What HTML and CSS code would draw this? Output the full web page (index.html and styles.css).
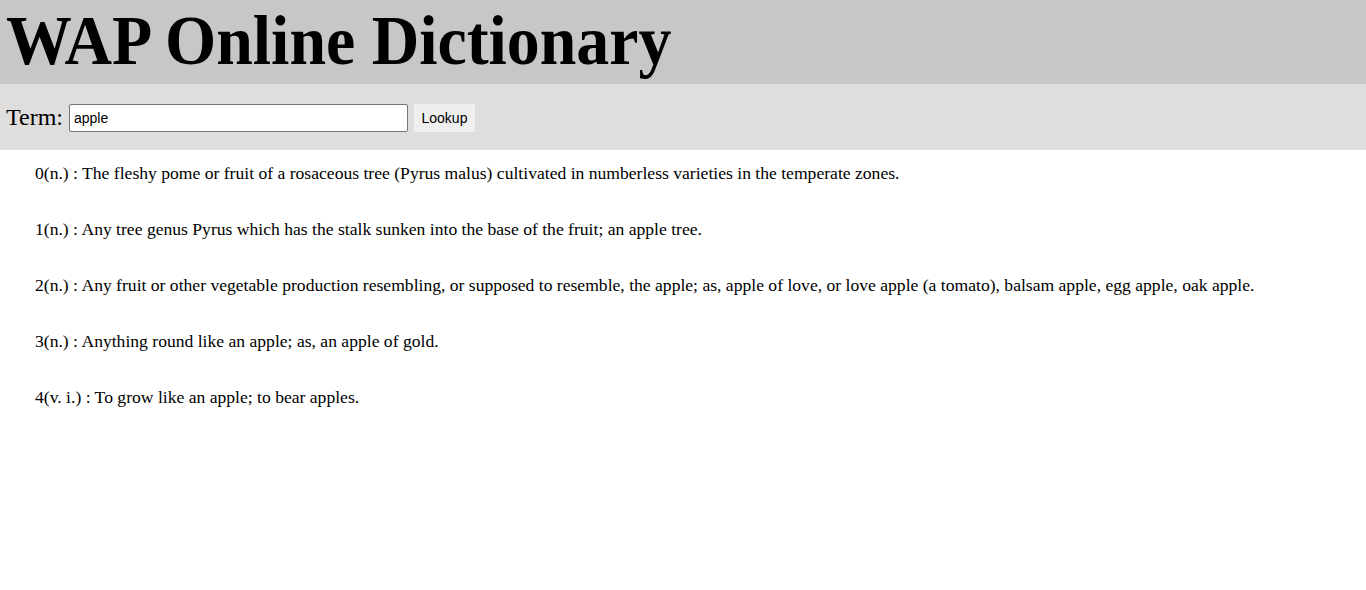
FILE: index.html
```html
<!DOCTYPE html>
<html>
<head>
<meta charset="utf-8">
<title>WAP Online Dictionary</title>
<link rel="stylesheet" href="styles.css">
</head>
<body>
<header class="header">
  <h1 class="title">WAP Online Dictionary</h1>
</header>
<form class="search">
  <label class="search-label" for="term">Term:</label>
  <input class="search-input" id="term" type="text" value="apple">
  <button class="search-button" type="button">Lookup</button>
</form>
<ul class="defs">
  <li class="def">0(n.) : The fleshy pome or fruit of a rosaceous tree (Pyrus malus) cultivated in numberless varieties in the temperate zones.</li>
  <li class="def">1(n.) : Any tree genus Pyrus which has the stalk sunken into the base of the fruit; an apple tree.</li>
  <li class="def">2(n.) : Any fruit or other vegetable production resembling, or supposed to resemble, the apple; as, apple of love, or love apple (a tomato), balsam apple, egg apple, oak apple.</li>
  <li class="def">3(n.) : Anything round like an apple; as, an apple of gold.</li>
  <li class="def">4(v. i.) : To grow like an apple; to bear apples.</li>
</ul>
</body>
</html>
```

FILE: styles.css
```css
html, body {
  margin: 0;
  padding: 0;
  background: #ffffff;
  font-family: "Liberation Serif", "Times New Roman", serif;
  color: #000;
}
.header {
  background: #c8c6c7;
  height: 84px;
  display: flex;
  align-items: center;
  padding: 0 6px;
}
.title {
  margin: 0;
  font-size: 70px;
  font-weight: bold;
  line-height: 1;
  white-space: nowrap;
  transform: scaleX(0.94);
  transform-origin: left center;
  position: relative;
  top: -1px;
}
.search {
  background: #e0dddd;
  height: 66px;
  display: flex;
  align-items: center;
  padding: 0 6px;
  margin: 0;
}
.search-label {
  font-size: 24px;
  margin-right: 6px;
}
.search-input {
  width: 339px;
  height: 28px;
  box-sizing: border-box;
  border: 1px solid #767676;
  border-radius: 2px;
  padding: 0 4px;
  font-family: "Liberation Sans", Arial, sans-serif;
  font-size: 14px;
  background: #fff;
  margin: 2px 0 0;
}
.search-button {
  margin: 2px 0 0 6px;
  height: 28px;
  width: 61px;
  border: none;
  background: #efefef;
  font-family: "Liberation Sans", Arial, sans-serif;
  font-size: 14px;
  padding: 0;
  color: #000;
}
.defs {
  list-style: none;
  margin: 0;
  padding: 13px 0 0 35px;
  display: flex;
  flex-direction: column;
  gap: 36px;
}
.def {
  font-size: 17.6px;
  line-height: 20px;
}
```
